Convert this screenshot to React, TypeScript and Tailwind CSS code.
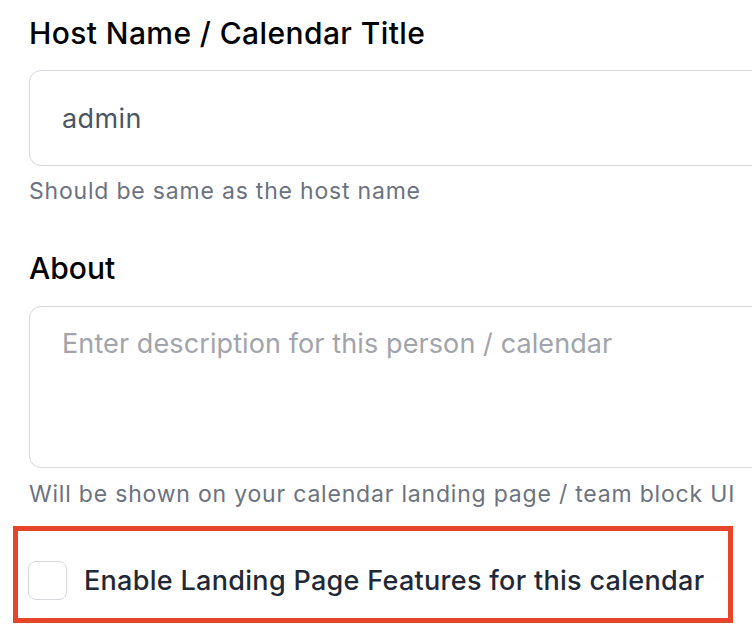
import React, { useState } from 'react';

const font = { fontFamily: 'Inter, "Noto Sans", sans-serif' };

export default function App() {
  const [name, setName] = useState('admin');
  const [about, setAbout] = useState('');
  const [enabled, setEnabled] = useState(false);

  return (
    <div className="min-h-screen w-full overflow-hidden bg-white pl-[29px] pt-[16px]" style={font}>
      <div className="w-[760px]">
        {/* Host name */}
        <label className="block text-[30px] leading-[34px] font-medium tracking-[0.4px] text-black">Host Name / Calendar Title</label>
        <input
          value={name}
          onChange={e => setName(e.target.value)}
          className="mt-[20px] block h-[96px] w-[760px] rounded-[12px] border-[1.5px] border-[#d4d7dd] px-[32px] text-[27px] tracking-[0.4px] text-[#4b5563] outline-none"
        />
        <p className="mt-[12px] text-[23px] leading-[27px] tracking-[0.8px] text-[#6b7280]">Should be same as the host name</p>

        {/* About */}
        <label className="mt-[46px] block text-[30px] leading-[34px] font-medium text-black">About</label>
        <textarea
          value={about}
          onChange={e => setAbout(e.target.value)}
          placeholder="Enter description for this person / calendar"
          className="mt-[21px] block h-[162px] w-[760px] resize-none rounded-[12px] border-[1.5px] border-[#d4d7dd] px-[32px] pt-[21px] text-[27px] leading-[32px] tracking-[0.1px] text-[#4b5563] outline-none placeholder:text-[#a1a4ab]"
        />
        <p className="mt-[13px] text-[23px] leading-[27px] tracking-[0.8px] text-[#6b7280]">Will be shown on your calendar landing page / team block UI</p>
      </div>

      {/* Landing page toggle */}
      <div className="ml-[-16px] mt-[18px] w-[720px] border-[5px] border-[#e8442a] pl-[10px] pt-[30px] pb-[18px]">
        <label className="flex cursor-pointer items-center gap-[17px]">
          <input
            type="checkbox"
            checked={enabled}
            onChange={e => setEnabled(e.target.checked)}
            className="h-[39px] w-[39px] shrink-0 appearance-none rounded-[8px] border-[1.5px] border-[#d4d7dd] bg-white checked:bg-[#2563eb]"
          />
          <span className="text-[27px] leading-[34px] font-medium tracking-[0.3px] text-[#1f2937]">Enable Landing Page Features for this calendar</span>
        </label>
      </div>
    </div>
  );
}
